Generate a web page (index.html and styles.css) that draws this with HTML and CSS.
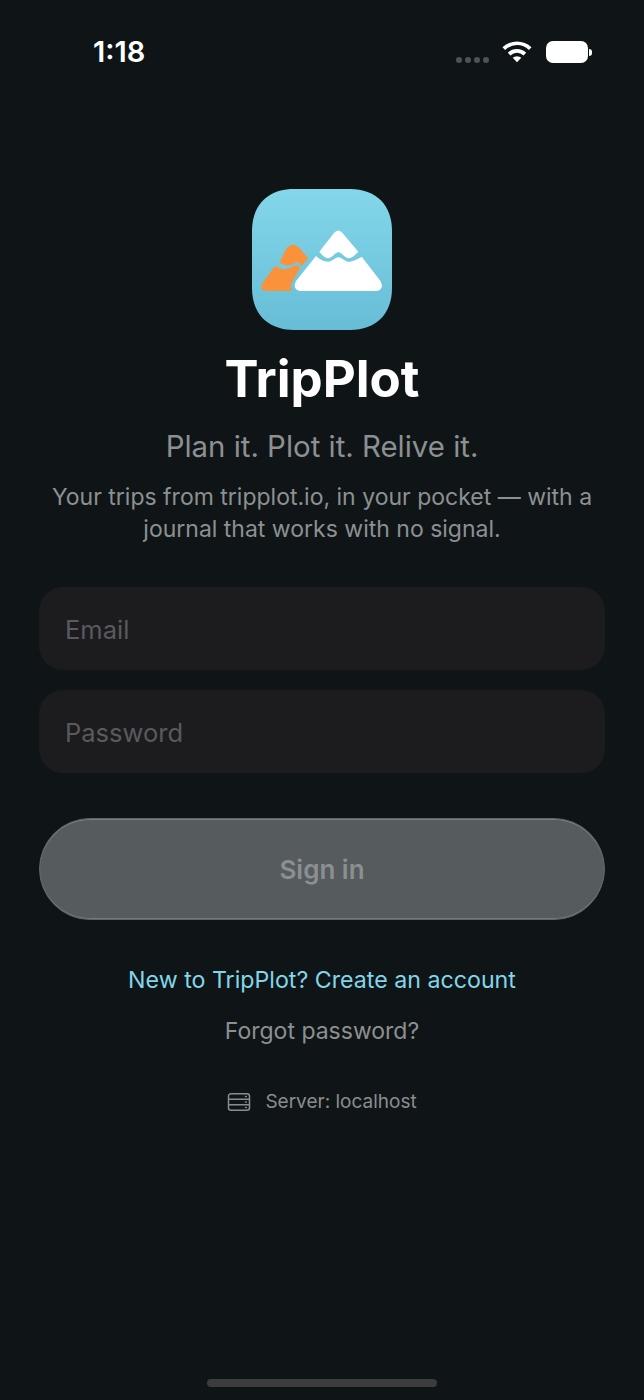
FILE: index.html
```html
<!DOCTYPE html>
<html lang="en">
<head>
    <meta charset="UTF-8">
    <meta name="viewport" content="width=device-width, initial-scale=1.0">
    <title>TripPlot</title>
    <link rel="stylesheet" href="styles.css">
</head>
<body>
    <div class="status-bar">
        <span class="time">1:18</span>
        <div class="status-icons">
            <div class="signal"><i></i><i></i><i></i><i></i></div>
            <svg class="wifi" width="32" height="24" viewBox="0 0 32 24">
                <path d="M1.5 8.2a21 21 0 0 1 29 0l-2.6 2.7a17.2 17.2 0 0 0-23.800 0z" fill="#fff"/>
                <path d="M6.800 13.700a13.400 13.400 0 0 1 18.400 0l-2.700 2.700a9.600 9.600 0 0 0-13 0z" fill="#fff"/>
                <path d="M11.700 18.800a6.400 6.400 0 0 1 8.600 0L16 23.200z" fill="#fff"/>
            </svg>
            <div class="battery"><div class="battery-body"></div><div class="battery-cap"></div></div>
        </div>
    </div>

    <main class="login">
        <svg class="app-icon" width="140" height="141" viewBox="0 0 140 141">
            <defs>
                <linearGradient id="iconSky" x1="0" y1="0" x2="0" y2="1">
                    <stop offset="0" stop-color="#84d7ea"/>
                    <stop offset="1" stop-color="#66bdd6"/>
                </linearGradient>
            </defs>
            <path d="M42 0H98C124 0 140 16 140 42V99C140 125 124 141 98 141H42C16 141 0 125 0 99V42C0 16 16 0 42 0Z" fill="url(#iconSky)"/>
            <!-- orange back mountain -->
            <path d="M34.500 59Q41 52.500 47.500 59L56.300 69.300L48.700 77.700Q48 72.500 44 73.500Q40 76.500 35.500 76.500Q31 76 27.300 73.700z" fill="#f9923a"/>
            <path d="M23 77Q28 80.500 33 80.300Q38 79.500 43 76.500Q47 75.500 48 79.300L40.500 92Q37.500 97 39.700 102H14Q7 101 10.500 94z" fill="#f9923a"/>
            <!-- white front mountain -->
            <path d="M82 44Q86.300 39 90.500 44L106.300 62.700C103 66 100 69.300 96.300 69.300C93 69.300 90 63.300 86.300 63.300C83 63.300 80 69.300 76.300 69.300C73 69.300 70 66 67.300 62.700z" fill="#fff"/>
            <path d="M64 67C67 70 72 72.700 76.300 72.700C80 72.700 83 68.300 86.300 68.300C90 68.300 93 72.700 96.300 72.700C101 72.700 106 70 109.700 67.700L128.500 92Q132.500 100 125 102H48Q40 100 44 92z" fill="#fff"/>
        </svg>
        <h1 class="app-name">TripPlot</h1>
        <p class="tagline">Plan it. Plot it. Relive it.</p>
        <p class="intro">Your trips from tripplot.io, in your pocket — with a journal that works with no signal.</p>

        <form class="login-form">
            <input class="field" type="email" placeholder="Email">
            <input class="field" type="password" placeholder="Password">
            <button class="sign-in" type="button" disabled>Sign in</button>
        </form>

        <a class="create-link" href="#">New to TripPlot? Create an account</a>
        <a class="forgot-link" href="#">Forgot password?</a>

        <div class="server">
            <svg width="24" height="20" viewBox="0 0 24 20" fill="none" stroke="#8a8d8f" stroke-width="1.500">
                <rect x="1.500" y="1.800" width="21" height="16.400" rx="2.500"/>
                <path d="M1.500 7.300h21M1.500 12.700h21"/>
                <path d="M18.500 4.500h.8M18.500 10h.8M18.500 15.500h.8" stroke-linecap="round"/>
            </svg>
            <span>Server: localhost</span>
        </div>
    </main>

    <div class="home-bar"></div>
</body>
</html>
```

FILE: styles.css
```css
* {
    box-sizing: border-box;
}
html, body {
    height: 100%;
}
body {
    font-family: Inter, "Liberation Sans", sans-serif;
    margin: 0;
    height: 1400px;
    overflow: hidden;
    background-color: #0f1516;
    display: flex;
    flex-direction: column;
}
.status-bar {
    height: 104px;
    padding: 34px 52px 0 93px;
    display: flex;
    justify-content: space-between;
    align-items: flex-start;
    color: #fff;
}
.time {
    font-size: 29px;
    font-weight: 600;
    line-height: 36px;
}
.status-icons {
    display: flex;
    align-items: center;
    gap: 12px;
    height: 36px;
}
.signal {
    display: flex;
    gap: 3px;
    margin-top: 16px;
}
.signal i {
    width: 6px;
    height: 6px;
    border-radius: 50%;
    background-color: #4f5354;
}
.wifi {
    margin-bottom: 2px;
}
.battery {
    display: flex;
    align-items: center;
    gap: 1px;
    margin-left: 1px;
}
.battery-body {
    width: 42px;
    height: 22px;
    background-color: #fff;
    border-radius: 7px;
}
.battery-cap {
    width: 3px;
    height: 7px;
    background-color: #fff;
    border-radius: 0 3px 3px 0;
}
.login {
    flex: 1;
    padding: 85px 39px 0;
    display: flex;
    flex-direction: column;
    align-items: center;
}
.app-icon {
    flex: none;
}
.app-name {
    margin: 18px 0 0;
    font-size: 51px;
    line-height: 62px;
    font-weight: 700;
    color: #fff;
}
.tagline {
    margin: 19px 0 0;
    font-size: 29.400px;
    line-height: 36px;
    color: #8d9092;
}
.intro {
    margin: 16px 0 0;
    width: 566px;
    font-size: 23px;
    line-height: 32px;
    text-align: center;
    color: #8d9092;
}
.login-form {
    width: 100%;
    margin-top: 42px;
    display: flex;
    flex-direction: column;
    gap: 20px;
}
.field {
    height: 83px;
    width: 100%;
    padding: 1px 26px 0;
    border: none;
    border-radius: 24px;
    background-color: #1c1c1e;
    font-family: inherit;
    font-size: 25.500px;
    color: #fff;
}
.field::placeholder {
    color: #59595e;
    opacity: 1;
}
.sign-in {
    height: 102px;
    width: 100%;
    margin-top: 25px;
    border: 1px solid #5e6365;
    border-radius: 51px;
    background-color: #565b5d;
    box-shadow: inset 0 1px 0 #7b8182, inset 0 -1px 0 #747a7b;
    font-family: inherit;
    font-size: 26px;
    font-weight: 600;
    color: #8a8f91;
}
.create-link {
    margin-top: 44px;
    font-size: 23.200px;
    line-height: 32px;
    color: #83d6ea;
    text-decoration: none;
}
.forgot-link {
    margin-top: 19px;
    font-size: 23px;
    line-height: 32px;
    color: #8d9092;
    text-decoration: none;
}
.server {
    margin-top: 43px;
    display: flex;
    align-items: center;
    gap: 14px;
    font-size: 19px;
    line-height: 24px;
    color: #8a8d8f;
}
.home-bar {
    position: absolute;
    left: 207px;
    bottom: 13px;
    width: 230px;
    height: 8px;
    border-radius: 4px;
    background-color: #3a3c3d;
}
```
